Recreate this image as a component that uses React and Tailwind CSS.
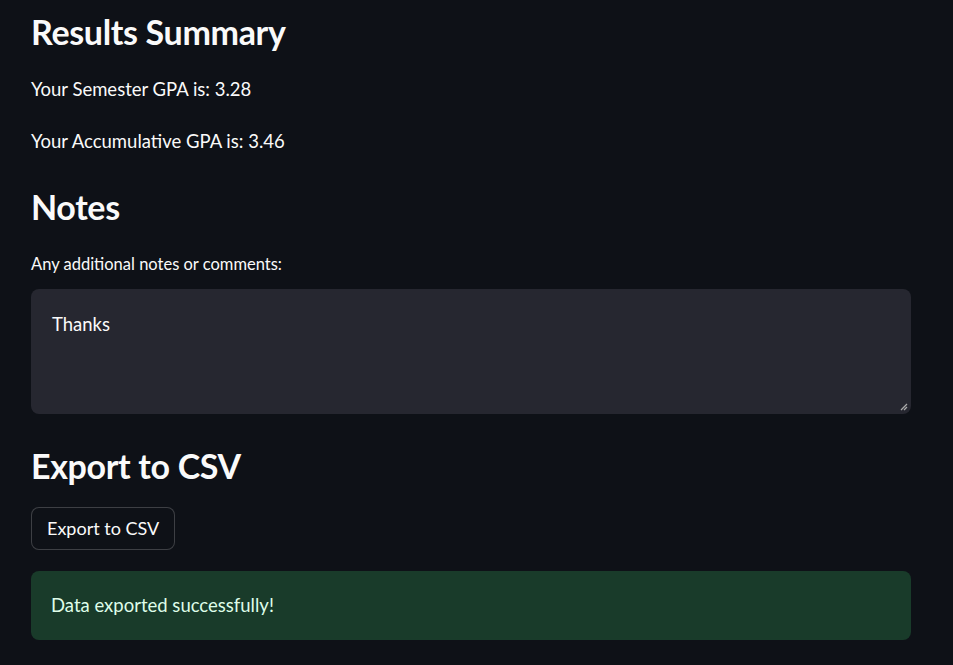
export default function App() {
  return (
    <div className="min-h-[665px] w-full bg-[#0e1117] text-[#fafafa] font-['Lato','Liberation_Sans',sans-serif]">
      <div className="w-[880px] ml-[31px] pt-[10px]">
        <h2 className="text-[34px] font-bold leading-[44px] tracking-[-0.01em]">Results Summary</h2>
        <p className="mt-[21px] text-[18.5px] leading-[28px]">Your Semester GPA is: 3.28</p>
        <p className="mt-[24px] text-[18.5px] leading-[28px]">Your Accumulative GPA is: 3.46</p>
        <h2 className="mt-[30px] text-[34px] font-bold leading-[44px] tracking-[-0.01em]">Notes</h2>
        <label className="block mt-[23px] text-[16.5px] leading-[24px]">Any additional notes or comments:</label>
        <div className="mt-[13px] relative h-[125px] rounded-[8px] bg-[#262730] px-[21px] pt-[21px] text-[18.5px] leading-[28px]">
          Thanks
          <svg className="absolute right-[3px] bottom-[3px]" width="9" height="9" viewBox="0 0 9 9">
            <path d="M8 2 L2 8 M8 5 L5 8" stroke="#aaa" strokeWidth="1.3" />
          </svg>
        </div>
        <h2 className="mt-[30px] text-[34px] font-bold leading-[44px] tracking-[-0.01em]">Export to CSV</h2>
        <button className="mt-[19px] h-[43px] px-[15px] rounded-[8px] border border-[rgba(250,250,250,0.2)] bg-[#0e1117] text-[18px] leading-[27px]">
          Export to CSV
        </button>
        <div className="mt-[21px] h-[69px] rounded-[8px] bg-[#193b2a] px-[20px] flex items-center text-[18.5px] text-[#dffde9]">
          Data exported successfully!
        </div>
      </div>
    </div>
  );
}
